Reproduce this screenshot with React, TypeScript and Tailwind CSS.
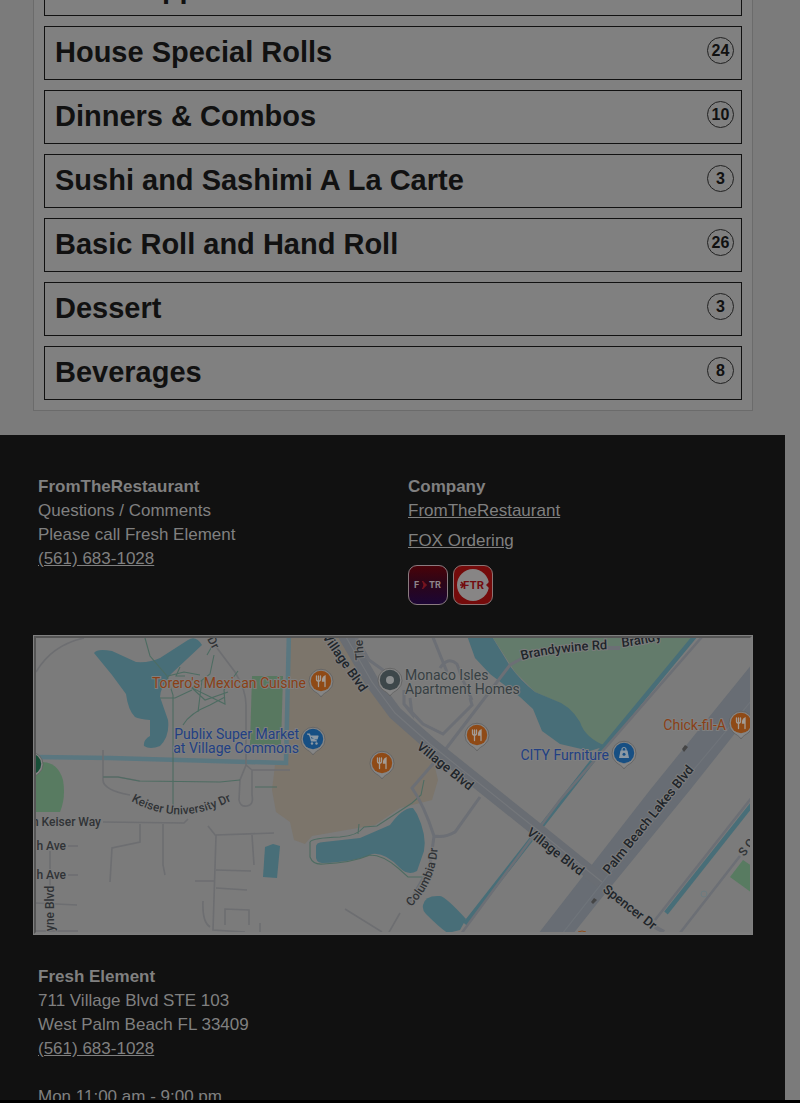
import type { ReactNode } from "react";

type Category = { name: string; count: number };

const categories: Category[] = [
  { name: "Sushi Appetizers", count: 9 },
  { name: "House Special Rolls", count: 24 },
  { name: "Dinners & Combos", count: 10 },
  { name: "Sushi and Sashimi A La Carte", count: 3 },
  { name: "Basic Roll and Hand Roll", count: 26 },
  { name: "Dessert", count: 3 },
  { name: "Beverages", count: 8 },
];

const CategoryRow = ({ name, count }: Category) => (
  <li>
    <button className="flex h-[54px] w-full items-start justify-between border border-[#111] pt-2 pr-[7px] pl-[10px] text-left">
      <span className="text-[29px] leading-[34px] font-bold">{name}</span>
      <span className="mt-[2px] flex h-[27px] w-[27px] items-center justify-center rounded-full border border-[#222] text-base leading-none font-bold">
        {count}
      </span>
    </button>
  </li>
);

type PinProps = { x: number; y: number; color: string; children?: ReactNode };

const Pin = ({ x, y, color, children }: PinProps) => (
  <g transform={`translate(${x} ${y})`}>
    <path
      d="M0 16C-2 12.500-5 11.800-8 9.200A12 12 0 1 1 8 9.200C5 11.800 2 12.500 0 16Z"
      fill="#858585"
      stroke="#606060"
      strokeWidth="0.8"
    />
    <circle r="10.200" fill={color} />
    {children}
  </g>
);

const FoodPin = ({ x, y }: { x: number; y: number }) => (
  <Pin x={x} y={y} color="#8f4a16">
    <g fill="none" stroke="#a39b94" strokeLinecap="round">
      <path d="M-4.500-5v3.500q0 1.500 2 1.500t2-1.500V-5M-2.500-5V5.500" strokeWidth="1.300" />
      <path d="M4 5.500V-5Q1.500-4 1.500 0H4" fill="#a39b94" strokeWidth="1.300" />
    </g>
  </Pin>
);

const AreaMap = () => (
  <svg
    className="block h-[294px] w-full font-[Roboto,sans-serif]"
    viewBox="36 638 714 294"
    preserveAspectRatio="xMidYMid slice"
    role="img"
    aria-label="Map of Village Blvd"
  >
    <defs>
      <path id="keiser" d="M131 801Q182 830 240 796" />
      <path id="columbia" d="M411 907Q437 882 438 842" />
      <path id="brandywine" d="M522 660Q560 650 620 649" />
      <path id="brandy" d="M622 647Q650 644 675 635" />
    </defs>
    <rect x="0" y="600" width="800" height="360" fill="#7b7b7b" />

    {/* land */}
    <path
      d="M290 638H340L395 718L430 746L438 780L432 800L400 808L375 825L312 836L305 844L294 840L290 822L276 812L272 790L275 765H288Z"
      fill="#7c756b"
    />
    <path d="M488 630L515 672L535 692L558 702L575 718L584 740L604 746L698 630Z" fill="#637b6b" />
    <path d="M252 676H283L281 745H250Z" fill="#587860" />
    <path d="M30 764Q56 756 63 780Q66 798 60 812H30Z" fill="#587b61" />
    <path d="M730 877L743 860L752 866V893Z" fill="#587b61" />

    {/* water */}
    <g fill="#486e78">
      <path d="M94 653Q97 648 112 651L136 662Q150 663 160 658L188 640Q196 635 202 645L171 674Q160 688 160 697L168 720Q170 736 160 746Q150 750 144 746Q143 740 150 736L150 720Q139 719 135 717Q128 710 126 694L112 675Z" />
      <path d="M465 630L475 658L490 674L520 697L533 709L542 731L560 744L590 751L606 746Q585 738 580 722Q570 705 554 700L535 692Q520 680 510 666L488 630Z" />
      <path d="M316 848Q315 842 324 842L360 838L390 825Q403 807 413 808L417 814Q427 835 424 851L417 871Q408 876 400 868Q385 852 372 854Q355 862 322 863Q315 862 316 855Z" />
      <path d="M265 847L273 844L280 846L277 878L263 877Z" />
      <path d="M423 905Q425 895 440 896Q446 897 466 919L460 930L448 933Q442 930 426 914Q422 910 423 905Z" />
    </g>
    <g fill="none" stroke="#486e78">
      <path d="M30 757L110 758L286 763L289 630" stroke="#5a7780" strokeWidth="4.500" />
      <path d="M700 630L605 745L465 924" strokeWidth="4.500" />
      <path d="M753 803L666 913" strokeWidth="4.500" />
    </g>

    {/* minor roads */}
    <g fill="none" stroke="#6d6e71" strokeWidth="1.600">
      <path d="M36 672Q52 645 84 638" />
      <path d="M103 750V780Q103 790 130 795M103 777H118L140 781" />
      <path d="M214 644L235 672Q246 690 246 705V765L240 780L239 800Q240 807 247 806T252 795V770L246 765M252 770H290" />
      <path d="M103 822L184 823L188 819M140 824V842L112 848L110 882M163 824V865L165 875" />
      <path d="M68 846H78M68 875H78M50 851V870M50 878V886M36 903L77 905M36 931H78" />
      <path d="M208 826L216 836L213 930L245 932M216 835L274 833M252 835L254 865M216 870L251 871M216 888L247 890M195 881H215M203 901Q202 922 210 927M225 925V909L249 910V925M260 923V932" />
      <path d="M345 909L382 932M400 913L388 934" />
    </g>
    <g fill="none" stroke="#4e6c62" strokeWidth="1.100">
      <path d="M103 777H118L139 781L220 782L240 780M173 815V695L167 676L150 656L145 638M183 725Q190 713 210 705L225 697M255 787H277M168 676L184 672L200 675M160 698H175L192 690M202 680L198 712M214 655L210 674L192 688L225 704L224 690L238 671M215 641L207 655M180 667L176 676L185 676M192 688L205 700L228 692" />
      <path d="M358 834L359 824M310 842Q312 838 340 837Q357 836 364 827L377 826L412 803L421 795L424 780M310 842V857Q313 865 323 864Q351 863 370 855Q383 855 398 868L408 877H422" />
    </g>
    <g fill="none" stroke="#6c6f75" strokeWidth="3">
      <path d="M430 630L447 672M404 690V704L412 714L410 698M404 704L423 724L443 734L472 705L470 698M440 668Q448 656 457 664L462 678L472 700M528 655L510 665L445 750L412 788Q424 805 434 836Q445 838 455 832L480 797M434 836L430 866L408 905" />
      <path d="M352 630L369 660L390 675" />
      <path d="M708 630L560 800L461 934M753 796L655 920M740 856L680 933" strokeWidth="2.500" />
      <path d="M606 648H620M655 927L664 932" strokeWidth="4" />
    </g>

    {/* boulevards */}
    <path d="M752 664L650 790L538 934H573L600 900L690 790L752 712Z" fill="#686d74" />
    <path d="M342 630L372 682L395 713L430 744L535 828L602 882" fill="none" stroke="#696d73" strokeWidth="14" />
    <path d="M342 630L372 682L395 713L430 744L535 828L602 882" fill="none" stroke="#74777b" strokeWidth="1.200" />
    <path d="M752 700L650 822L562 934" fill="none" stroke="#6f747a" strokeWidth="1.200" />
    <g fill="#454545">
      <path d="M682 749l3-4 3 2-4 5ZM591 902l3-4 3 2-4 4Z" />
    </g>
    <circle cx="704" cy="894" r="3" fill="none" stroke="#6c7b80" />
    <path d="M578 932q4-2 8 0" fill="none" stroke="#8f4a16" />

    {/* street names */}
    <g fill="#20252a" stroke="#7c7c7c" strokeWidth="2" paintOrder="stroke" fontSize="13" fontWeight="500">
      <text transform="translate(322 637) rotate(55)">Village Blvd</text>
      <text transform="translate(416 748) rotate(39)">Village Blvd</text>
      <text transform="translate(526 834) rotate(38)">Village Blvd</text>
      <text transform="translate(609 875) rotate(-51)">Palm Beach Lakes Blvd</text>
      <text transform="translate(602 891) rotate(38)">Spencer Dr</text>
      <text>
        <textPath href="#brandywine">Brandywine Rd</textPath>
      </text>
      <text>
        <textPath href="#brandy">Brandy</textPath>
      </text>
    </g>
    <g fill="#303336" stroke="#7c7c7c" strokeWidth="2" paintOrder="stroke" fontSize="12" fontWeight="500">
      <text>
        <textPath href="#keiser">Keiser University Dr</textPath>
      </text>
      <text>
        <textPath href="#columbia">Columbia Dr</textPath>
      </text>
      <text x="101" y="826" textAnchor="end">
        n Keiser Way
      </text>
      <text x="66" y="850" textAnchor="end">
        h Ave
      </text>
      <text x="66" y="879" textAnchor="end">
        h Ave
      </text>
      <text transform="translate(54 931) rotate(-90)">yne Blvd</text>
      <text transform="translate(364 660) rotate(-94)">The</text>
      <text transform="translate(207 639) rotate(62)">Dr</text>
      <text transform="translate(744 857) rotate(-51)">S C</text>
    </g>

    {/* places */}
    <g stroke="#7f7f7f" strokeWidth="2" paintOrder="stroke" fontSize="14">
      <g fill="#8a3f16" textAnchor="end">
        <text x="306" y="688">Torero's Mexican Cuisine</text>
        <text x="726" y="730">Chick-fil-A</text>
      </g>
      <g fill="#223f83" textAnchor="end">
        <text x="299" y="739">Publix Super Market</text>
        <text x="299" y="753">at Village Commons</text>
        <text x="609" y="760">CITY Furniture</text>
      </g>
      <g fill="#373f43">
        <text x="405" y="680">Monaco Isles</text>
        <text x="405" y="694">Apartment Homes</text>
      </g>
    </g>
    <FoodPin x={321} y={681} />
    <FoodPin x={382} y={763} />
    <FoodPin x={477} y={735} />
    <FoodPin x={741} y={723} />
    <Pin x={390} y={680} color="#3d474a">
      <circle r="4" fill="#8a8d8e" />
    </Pin>
    <Pin x={31} y={764} color="#174e37" />
    <Pin x={313} y={739} color="#174f83">
      <path
        d="M-6-5h2.500l2 7h5.500M-3-3H5L4 0H-2Z"
        fill="#8b98a3"
        stroke="#8b98a3"
        strokeWidth="1.200"
        strokeLinejoin="round"
      />
      <circle cx="-1" cy="4.500" r="1.200" fill="#8b98a3" />
      <circle cx="3.500" cy="4.500" r="1.200" fill="#8b98a3" />
    </Pin>
    <Pin x={624} y={753} color="#174f83">
      <path d="M-3.500-2.500h7L5 5H-5Z" fill="#8b98a3" />
      <path d="M-2-2v-1.500a2 2 0 0 1 4 0V-2" fill="none" stroke="#8b98a3" strokeWidth="1.200" />
      <circle cy="1.200" r="1.500" fill="#174f83" />
    </Pin>
  </svg>
);

const FtrDarkLogo = () => (
  <svg className="h-10 w-10" viewBox="0 0 40 40" role="img" aria-label="FTR app">
    <defs>
      <linearGradient id="ftr-bg" x1="0" y1="0" x2="0" y2="1">
        <stop offset="0" stopColor="#4a0208" />
        <stop offset="0.450" stopColor="#2c0518" />
        <stop offset="1" stopColor="#1b0635" />
      </linearGradient>
    </defs>
    <rect x="0.500" y="0.500" width="39" height="39" rx="8.500" fill="url(#ftr-bg)" stroke="#8a7b80" />
    <g className="font-[Inter,sans-serif]" fill="#8d858c" fontSize="9" fontWeight="700">
      <text x="6" y="23">F</text>
      <text x="21" y="23">TR</text>
    </g>
    <path d="M14.500 16L18.500 20L14.500 24L16 20Z" fill="#77141f" stroke="#77141f" />
  </svg>
);

const FtrRedLogo = () => (
  <svg className="h-10 w-10" viewBox="0 0 40 40" role="img" aria-label="FTR ordering">
    <rect x="0.500" y="0.500" width="39" height="39" rx="8.500" fill="#740b0b" stroke="#8a7474" />
    <circle cx="20" cy="20" r="16" fill="#878585" />
    <text className="font-[Inter,sans-serif]" x="10" y="24" fill="#730d10" fontSize="11" fontWeight="700">
      FTR
    </text>
    <path d="M8 17l3 3-3 3M7 20h4" fill="none" stroke="#730d10" strokeWidth="1.500" />
    <path d="M36 17l-3 3 3 3Z" fill="#740b0b" />
  </svg>
);

export default function App() {
  return (
    <div className="flex h-screen flex-col overflow-hidden bg-[#7b7b7b] font-['Liberation_Sans',Arial,sans-serif] text-[#111]">
      <div className="min-h-0 flex-1 overflow-hidden pr-[15px]">
        <main className="pr-8 pb-6 pl-[33px]">
          {/* list is scrolled, so the first category is cut at the top */}
          <ul className="-mt-[38px] flex flex-col gap-[10px] border-x border-b border-[#6b6b6b] bg-[#808080] px-[10px] pb-[10px]">
            {categories.map((category) => (
              <CategoryRow key={category.name} {...category} />
            ))}
          </ul>
        </main>

        <footer className="bg-[#111] pt-10 pr-8 pb-12 pl-[33px] text-[17px] leading-6 text-[#808080]">
          <div className="grid grid-cols-[370px_1fr] pl-[5px]">
            <section>
              <h2 className="font-bold">FromTheRestaurant</h2>
              <p>Questions / Comments</p>
              <p>Please call Fresh Element</p>
              <a href="tel:5616831028" className="underline">
                (561) 683-1028
              </a>
            </section>
            <section>
              <h2 className="font-bold">Company</h2>
              <ul className="flex flex-col gap-[6px]">
                <li>
                  <a href="#restaurant" className="underline">
                    FromTheRestaurant
                  </a>
                </li>
                <li>
                  <a href="#ordering" className="underline">
                    FOX Ordering
                  </a>
                </li>
              </ul>
              <div className="mt-3 flex gap-[5px]">
                <FtrDarkLogo />
                <FtrRedLogo />
              </div>
            </section>
          </div>

          <div className="mt-[30px] border border-[#808080]">
            <div className="border-2 border-t-[#555] border-r-[#7d7d7d] border-b-[#7d7d7d] border-l-[#555]">
              <AreaMap />
            </div>
          </div>

          <section className="mt-[30px] pl-[5px]">
            <h2 className="font-bold">Fresh Element</h2>
            <p>711 Village Blvd STE 103</p>
            <p>West Palm Beach FL 33409</p>
            <a href="tel:5616831028" className="underline">
              (561) 683-1028
            </a>
            <p className="mt-6">Mon 11:00 am - 9:00 pm</p>
          </section>
        </footer>
      </div>
      <div className="h-[3px] bg-black" />
    </div>
  );
}
